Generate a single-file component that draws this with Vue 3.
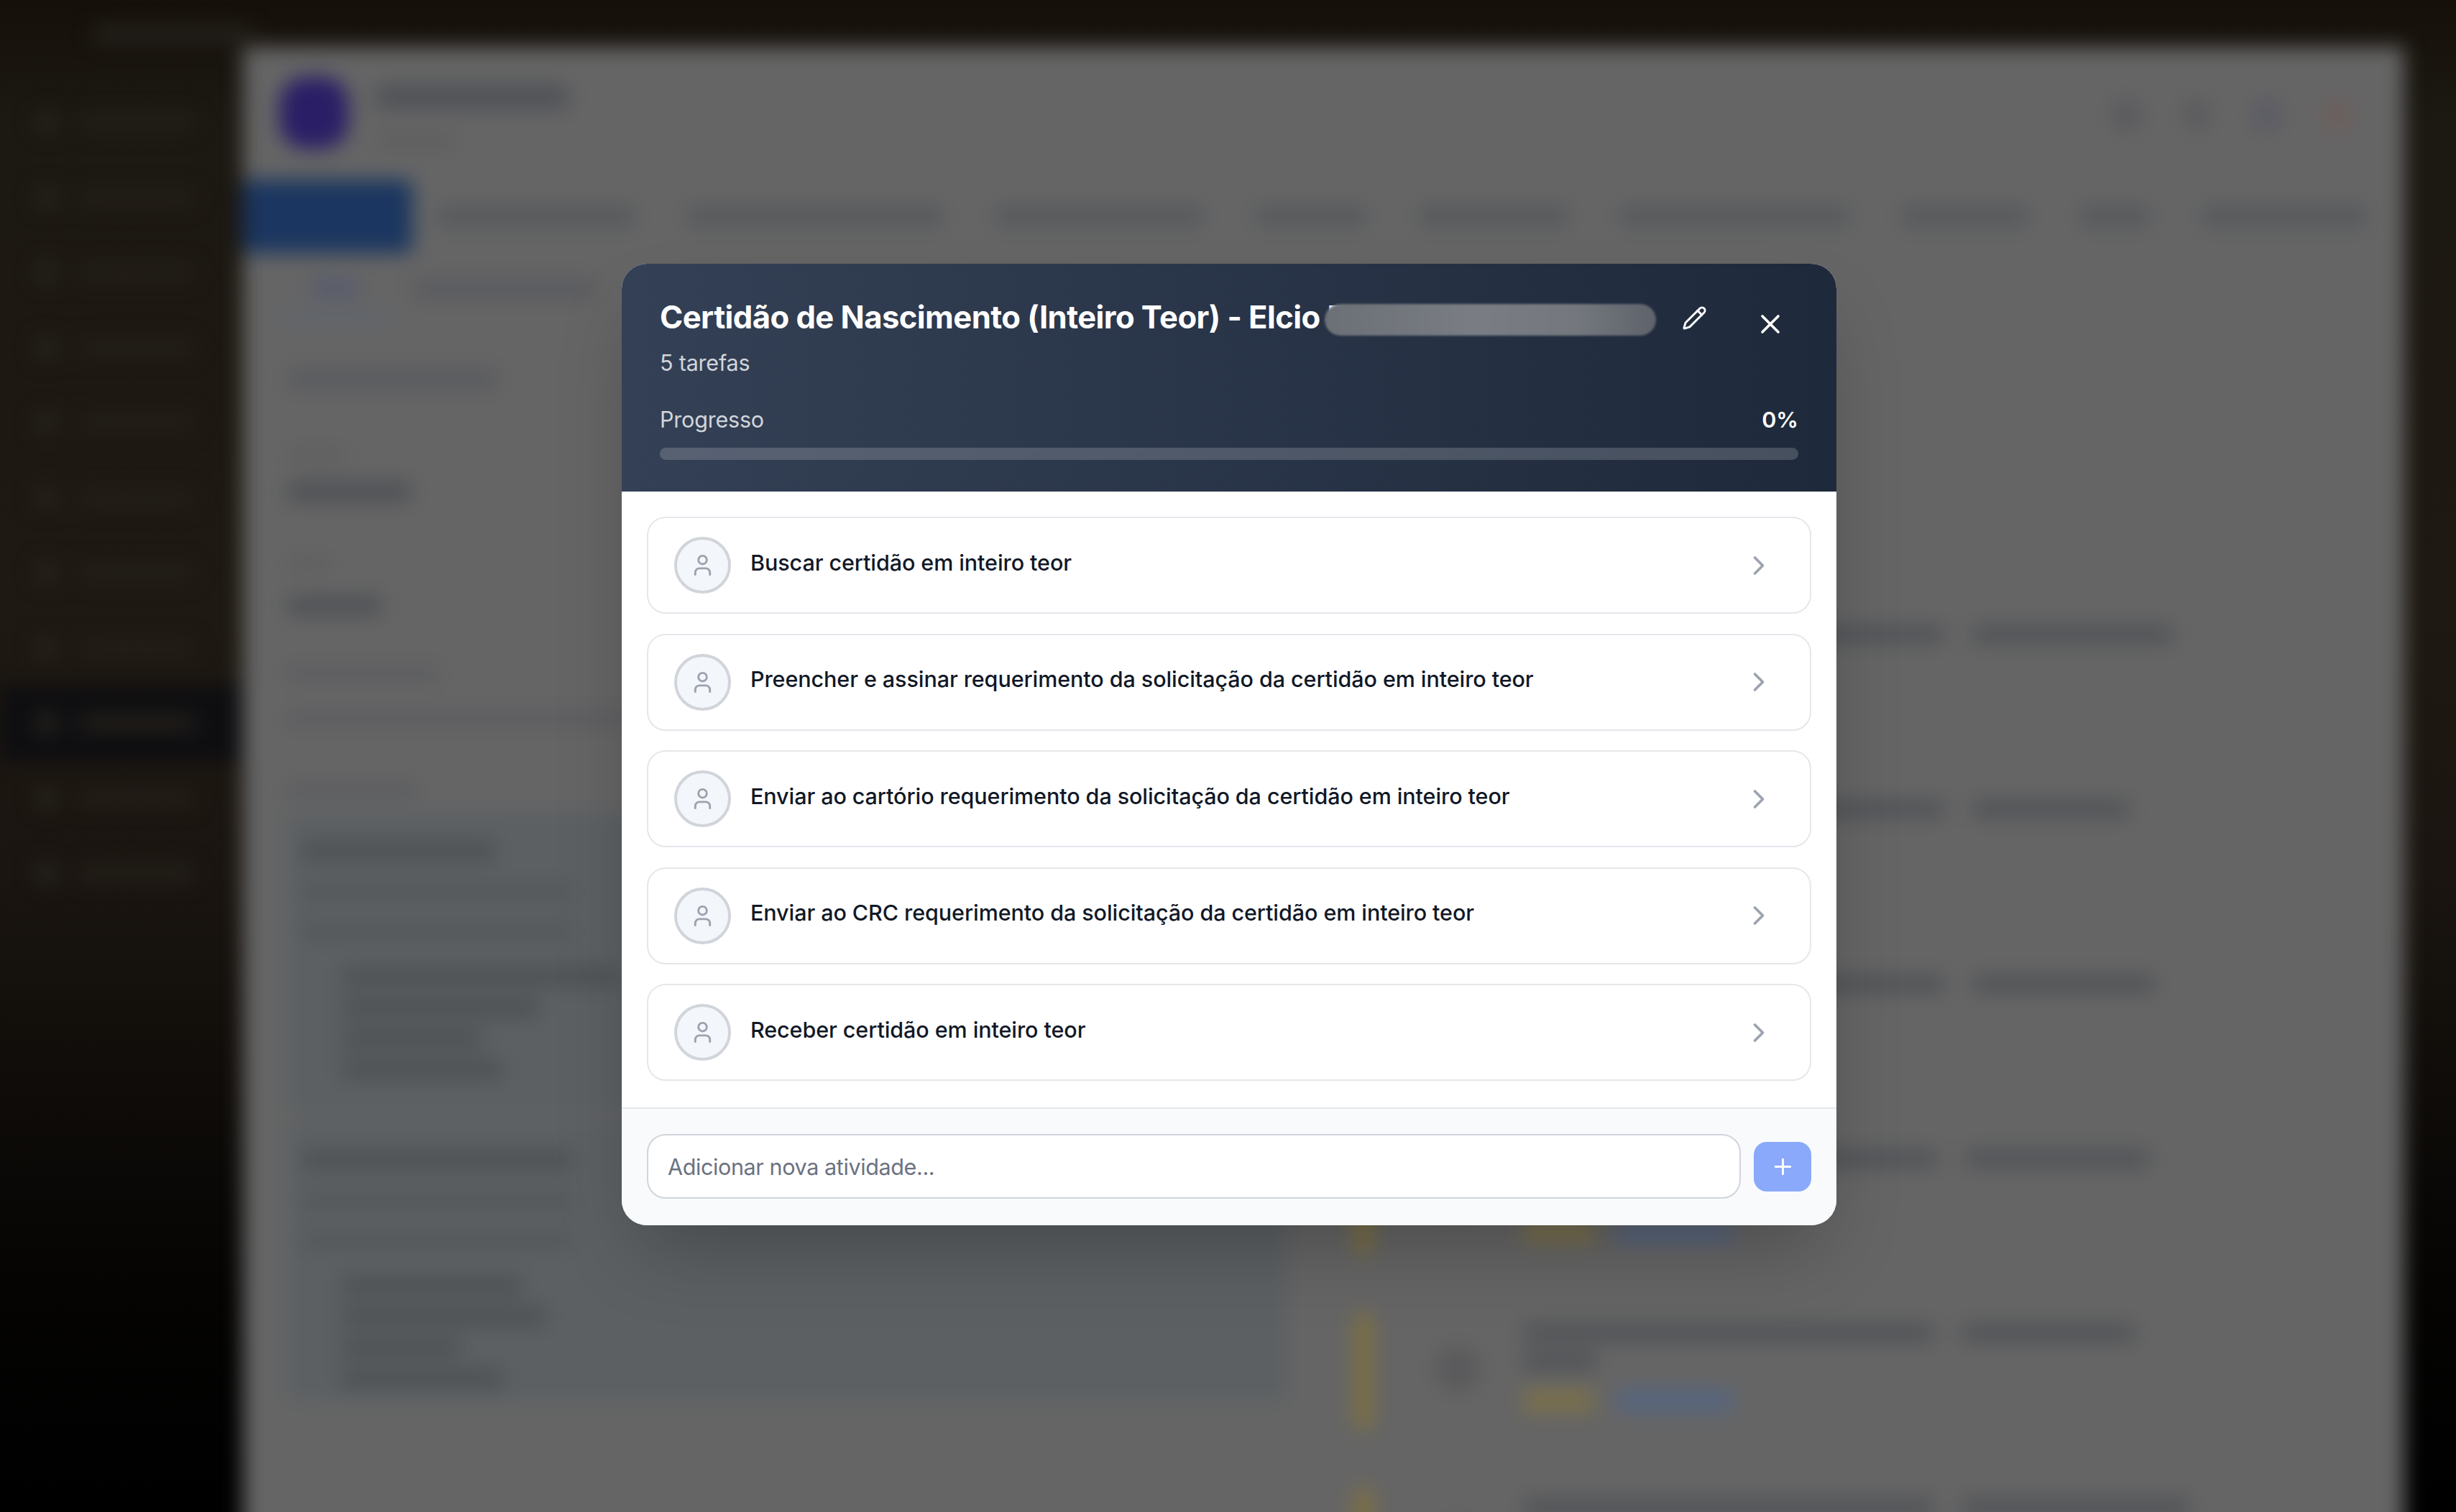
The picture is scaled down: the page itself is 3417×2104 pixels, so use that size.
<script setup>
const sideItems = [0, 1, 2, 3, 4, 5, 6, 7, 8, 9, 10]
const topTabs = [272, 355, 288, 153, 207, 317, 174, 96, 228]
const headIcons = ['#5a5a5f', '#5c5c5f', '#5b5b65', '#6c5f5c']
const fieldRows = [
  { w: 293, cls: 'bar-mid', mt: 63, h: 32 },
  { w: 80, cls: 'bar-faint', mt: 81, h: 20 },
  { w: 171, cls: 'bar-dark', mt: 25, h: 30 },
  { w: 60, cls: 'bar-faint', mt: 75, h: 20 },
  { w: 131, cls: 'bar-dark', mt: 35, h: 28 },
  { w: 210, cls: 'bar-soft', mt: 69, h: 22 },
  { w: 1000, cls: 'bar-soft', mt: 41, h: 22 },
  { w: 178, cls: 'bar-soft', mt: 76, h: 22 }
]
const sections = [
  { head: 270, lines: [375, 375], list: [385, 275, 195, 225] },
  { head: 375, lines: [375, 375], list: [250, 285, 165, 225] }
]
const rightRows = [
  { a: 585, b: 278, wrap: false, tags: false },
  { a: 585, b: 216, wrap: false, tags: false },
  { a: 585, b: 252, wrap: false, tags: false },
  { a: 575, b: 255, wrap: false, tags: true },
  { a: 570, b: 240, wrap: true, tags: true },
  { a: 570, b: 316, wrap: false, tags: false }
]
const tasks = [
  'Buscar certidão em inteiro teor',
  'Preencher e assinar requerimento da solicitação da certidão em inteiro teor',
  'Enviar ao cartório requerimento da solicitação da certidão em inteiro teor',
  'Enviar ao CRC requerimento da solicitação da certidão em inteiro teor',
  'Receber certidão em inteiro teor'
]
</script>

<template>
  <div class="screen">
    <div class="app" aria-hidden="true">
      <aside class="sidebar">
        <div class="brand-bar"></div>
        <div v-for="i in sideItems" :key="i" class="side-item" :class="{ 'side-active': i === 8 }">
          <span class="side-dot"></span>
          <span class="side-bar"></span>
        </div>
      </aside>

      <main class="panel">
        <header class="page-head">
          <div class="page-avatar"></div>
          <div class="page-titles">
            <span class="page-title"></span>
            <span class="page-sub"></span>
          </div>
          <div class="page-icons">
            <span v-for="c in headIcons" :key="c" class="page-icon" :style="{ background: c }"></span>
          </div>
        </header>

        <nav class="tabs">
          <span class="tab-active"></span>
          <span v-for="w in topTabs" :key="w" class="tab-bar" :style="{ width: w + 'px' }"></span>
        </nav>

        <div class="subtabs">
          <div class="subtab-one">
            <span class="subtab-text"></span>
            <span class="subtab-line"></span>
          </div>
          <span class="subtab-two"></span>
        </div>

        <div class="columns">
          <div class="col-left">
            <div
              v-for="(f, i) in fieldRows"
              :key="i"
              class="bar"
              :class="f.cls"
              :style="{ width: f.w + 'px', marginTop: f.mt + 'px', height: f.h + 'px' }"
            ></div>
            <section v-for="(s, i) in sections" :key="i" class="info-card">
              <div class="bar bar-head" :style="{ width: s.head + 'px' }"></div>
              <div v-for="(w, j) in s.lines" :key="j" class="bar bar-soft2" :style="{ width: w + 'px' }"></div>
              <div class="info-list">
                <div v-for="(w, j) in s.list" :key="j" class="bar bar-head" :style="{ width: w + 'px' }"></div>
              </div>
            </section>
          </div>

          <div class="col-right">
            <div v-for="(r, i) in rightRows" :key="i" class="doc-row">
              <span class="doc-stripe"></span>
              <span class="doc-circle"></span>
              <div class="doc-body">
                <div class="doc-line">
                  <span class="bar bar-dark" :style="{ width: r.a + 'px' }"></span>
                  <span class="bar bar-dark" :style="{ width: r.b + 'px' }"></span>
                </div>
                <div v-if="r.wrap" class="bar bar-dark doc-wrap"></div>
                <div v-if="r.tags" class="doc-tags">
                  <span class="tag-yellow"></span>
                  <span class="tag-blue"></span>
                </div>
              </div>
            </div>
          </div>
        </div>
      </main>
    </div>

    <div class="overlay">
      <div class="modal">
        <button class="close" type="button" aria-label="Fechar">
          <svg viewBox="0 0 24 24" class="ico-close"><path d="M18 6 6 18" /><path d="m6 6 12 12" /></svg>
        </button>

        <header class="modal-head">
          <div class="title-row">
            <div class="title-wrap">
              <h2 class="title">Certidão de Nascimento (Inteiro Teor) - Elcio F</h2>
              <span class="smear"></span>
            </div>
            <svg viewBox="0 0 24 24" class="ico-pencil">
              <path d="M21.174 6.812a1 1 0 0 0-3.986-3.987L3.842 16.174a2 2 0 0 0-.5.83l-1.321 4.352a.5.5 0 0 0 .623.622l4.353-1.32a2 2 0 0 0 .83-.497z" />
              <path d="m15 5 4 4" />
            </svg>
          </div>
          <p class="count">5 tarefas</p>
          <div class="progress-row">
            <span>Progresso</span>
            <span class="percent">0%</span>
          </div>
          <div class="track"></div>
        </header>

        <div class="list">
          <div v-for="t in tasks" :key="t" class="task">
            <span class="avatar">
              <svg viewBox="0 0 24 24" class="ico-user">
                <path d="M19 21v-2a4 4 0 0 0-4-4H9a4 4 0 0 0-4 4v2" />
                <circle cx="12" cy="7" r="4" />
              </svg>
            </span>
            <span class="task-label">{{ t }}</span>
            <svg viewBox="0 0 24 24" class="ico-chevron"><path d="m9 18 6-6-6-6" /></svg>
          </div>
        </div>

        <footer class="foot">
          <input class="new-task" type="text" placeholder="Adicionar nova atividade..." />
          <button class="add" type="button" aria-label="Adicionar">
            <svg viewBox="0 0 24 24" class="ico-plus"><path d="M5 12h14" /><path d="M12 5v14" /></svg>
          </button>
        </footer>
      </div>
    </div>
  </div>
</template>

<style>
html,
body {
  margin: 0;
  background: #000;
}
</style>

<style scoped>
.screen {
  position: relative;
  width: 3417px;
  height: 2104px;
  overflow: hidden;
  background: linear-gradient(
    to bottom,
    #15100a 0%,
    #1c1812 8%,
    #1e1912 40%,
    #1a1510 58%,
    #0f0c09 72%,
    #050403 85%,
    #000 100%
  );
  font-family: Inter, 'Noto Sans', sans-serif;
}

/* Blurred page behind the dialog */
.app {
  display: grid;
  grid-template-columns: 338px 3007px;
  height: 2160px;
  filter: blur(14px);
}
.sidebar {
  position: relative;
  padding-top: 118px;
}
.brand-bar {
  position: absolute;
  left: 130px;
  top: 36px;
  width: 220px;
  height: 22px;
  background: #25221d;
}
.side-item {
  display: flex;
  align-items: center;
  gap: 30px;
  height: 104.5px;
  padding-left: 50px;
}
.side-active {
  background: #0e0e11;
}
.side-dot {
  width: 30px;
  height: 30px;
  border-radius: 8px;
  background: #26231d;
}
.side-bar {
  width: 160px;
  height: 24px;
  background: #231f19;
}
.panel {
  margin-top: 65px;
  background: #656565;
  display: flex;
  flex-direction: column;
}
.page-head {
  display: flex;
  align-items: flex-start;
  padding: 42px 72px 0 51px;
  height: 143px;
  box-sizing: border-box;
}
.page-avatar {
  width: 96px;
  height: 100px;
  border-radius: 36px;
  background: #2a1e66;
}
.page-titles {
  display: flex;
  flex-direction: column;
  margin-left: 38px;
  padding-top: 11px;
}
.page-title {
  width: 267px;
  height: 34px;
  background: #505257;
}
.page-sub {
  width: 109px;
  height: 18px;
  margin-top: 35px;
  background: #5d5d5d;
}
.page-icons {
  display: flex;
  gap: 56px;
  margin-left: auto;
  padding-top: 30px;
}
.page-icon {
  width: 42px;
  height: 46px;
  border-radius: 50%;
}
.tabs {
  display: flex;
  align-items: center;
  gap: 74px;
  height: 102px;
  margin-top: 42px;
  border-bottom: 2px solid #606060;
}
.tab-active {
  width: 236px;
  height: 102px;
  margin-right: -38px;
  border-radius: 12px;
  background: #1b3660;
}
.tab-bar {
  height: 26px;
  background: #55585c;
}
.subtabs {
  display: flex;
  gap: 33px;
  padding: 34px 0 0 54px;
  height: 60px;
}
.subtab-one {
  display: flex;
  flex-direction: column;
  align-items: center;
  width: 148px;
}
.subtab-text {
  width: 66px;
  height: 28px;
  background: #565c6e;
}
.subtab-line {
  width: 148px;
  height: 12px;
  margin-top: 24px;
  background: #5c6472;
}
.subtab-two {
  width: 255px;
  height: 28px;
  background: #5a5b60;
}
.columns {
  display: grid;
  grid-template-columns: 1390px 1440px;
  column-gap: 60px;
  padding-left: 62px;
}
.col-left {
  display: flex;
  flex-direction: column;
}
.bar {
  display: block;
  height: 24px;
  flex: none;
}
.bar-dark {
  background: #505256;
}
.bar-mid {
  background: #5b5c60;
}
.bar-faint {
  background: #5f5f60;
}
.bar-soft {
  background: #5c5d60;
}
.bar-head {
  height: 26px;
  background: #4e5154;
}
.bar-soft2 {
  height: 22px;
  margin-top: 33px;
  background: #54575a;
}
.info-card {
  box-sizing: border-box;
  margin-top: 21px;
  width: 1390px;
  height: 420px;
  padding: 41px 20px 0;
  background: #5c6063;
}
.info-card + .info-card {
  margin-top: 10px;
  height: 390px;
}
.info-list {
  display: flex;
  flex-direction: column;
  gap: 17px;
  margin-top: 39px;
  padding-left: 55px;
}
.col-right {
  display: flex;
  flex-direction: column;
  margin-top: 423px;
}
.doc-row {
  display: flex;
  height: 243px;
  flex: none;
}
.doc-stripe {
  width: 24px;
  height: 164px;
  margin-left: 35px;
  margin-top: -17px;
  border-radius: 12px;
  background: #80703f;
}
.doc-circle {
  width: 64px;
  height: 64px;
  margin: 30px 0 0 87px;
  border-radius: 50%;
  background: #5a5a5c;
}
.doc-body {
  margin-left: 60px;
}
.doc-line {
  display: flex;
  gap: 40px;
}
.doc-wrap {
  width: 100px;
  margin-top: 15px;
}
.doc-tags {
  display: flex;
  gap: 33px;
  margin-top: 75px;
}
.doc-wrap + .doc-tags {
  margin-top: 28px;
}
.tag-yellow {
  width: 97px;
  height: 30px;
  background: #7c7049;
}
.tag-blue {
  width: 160px;
  height: 30px;
  background: #566581;
}

/* Dialog */
.overlay {
  position: absolute;
  inset: 0;
  display: flex;
  justify-content: center;
  align-items: flex-start;
  padding: 367px 0 0 3px;
}
.modal {
  position: relative;
  width: 1690px;
  border-radius: 35px;
  overflow: hidden;
  background: #fff;
  box-shadow: 0 54px 109px -26px rgba(0, 0, 0, 0.25);
}
.close {
  position: absolute;
  top: 62px;
  right: 70px;
  width: 44px;
  height: 44px;
  padding: 0;
  border: 0;
  background: none;
  display: flex;
}
.ico-close {
  width: 44px;
  height: 44px;
  fill: none;
  stroke: #fff;
  stroke-width: 2;
  stroke-linecap: round;
  stroke-linejoin: round;
}
.modal-head {
  box-sizing: border-box;
  height: 317px;
  padding: 45px 53px 0 53px;
  background: linear-gradient(to right, #344055, #1e293b);
  color: #fff;
}
.title-row {
  display: flex;
  align-items: center;
  height: 60px;
}
.title-wrap {
  position: relative;
  flex: 0 0 1422px;
}
.title {
  margin: 0;
  font-size: 43.6px;
  line-height: 60px;
  font-weight: 700;
  letter-spacing: -0.56px;
  white-space: nowrap;
}
.smear {
  position: absolute;
  left: 925px;
  top: 11px;
  width: 461px;
  height: 44px;
  border-radius: 22px;
  background: linear-gradient(to right, #6b7076, #797d83 45%, #74787e 75%, #5e636b);
  filter: blur(1.5px);
}
.ico-pencil {
  width: 35px;
  height: 35px;
  flex: none;
  fill: none;
  stroke: #fff;
  stroke-width: 2;
  stroke-linecap: round;
  stroke-linejoin: round;
}
.count {
  margin: 11px 0 0;
  font-size: 30.5px;
  line-height: 44px;
  letter-spacing: -0.2px;
  color: #d1d5db;
}
.progress-row {
  display: flex;
  justify-content: space-between;
  margin-top: 35px;
  font-size: 30.5px;
  line-height: 44px;
  letter-spacing: -0.2px;
  color: #d1d5db;
}
.percent {
  color: #fff;
  font-weight: 600;
  letter-spacing: 0;
}
.track {
  height: 17px;
  margin-top: 17px;
  border-radius: 9px;
  background: rgba(255, 255, 255, 0.18);
}
.list {
  display: flex;
  flex-direction: column;
  gap: 27.5px;
  padding: 35px 35px 37px;
}
.task {
  box-sizing: border-box;
  display: flex;
  align-items: center;
  height: 135px;
  padding: 0 49px 0 36px;
  border: 2px solid #e5e7eb;
  border-radius: 26px;
  background: #fff;
}
.avatar {
  box-sizing: border-box;
  display: flex;
  align-items: center;
  justify-content: center;
  width: 79px;
  height: 79px;
  flex: none;
  border: 4px solid #d1d5db;
  border-radius: 50%;
  background: #f3f6fa;
}
.ico-user {
  width: 35px;
  height: 35px;
  fill: none;
  stroke: #9ca3af;
  stroke-width: 2;
  stroke-linecap: round;
  stroke-linejoin: round;
}
.task-label {
  flex: 1;
  margin: 0 0 8px 27px;
  font-size: 30.5px;
  line-height: 44px;
  font-weight: 500;
  letter-spacing: -0.08px;
  color: #111827;
}
.ico-chevron {
  width: 44px;
  height: 44px;
  flex: none;
  fill: none;
  stroke: #9ca3af;
  stroke-width: 2;
  stroke-linecap: round;
  stroke-linejoin: round;
}
.foot {
  display: flex;
  align-items: center;
  gap: 18px;
  padding: 35px 35px 37px;
  border-top: 2px solid #e5e7eb;
  background: #f8fafc;
}
.new-task {
  box-sizing: border-box;
  flex: 1;
  min-width: 0;
  height: 90px;
  padding: 0 27px;
  border: 2px solid #d1d5db;
  border-radius: 26px;
  background: #fff;
  font-family: Inter, 'Noto Sans', sans-serif;
  font-size: 30.5px;
  letter-spacing: -0.38px;
  color: #111827;
  outline: none;
}
.new-task::placeholder {
  color: #6b7280;
  opacity: 1;
}
.add {
  display: flex;
  align-items: center;
  justify-content: center;
  width: 80px;
  height: 69px;
  flex: none;
  padding: 0;
  border: 0;
  border-radius: 18px;
  background: #8aa9fb;
}
.ico-plus {
  width: 35px;
  height: 35px;
  fill: none;
  stroke: #fff;
  stroke-width: 2;
  stroke-linecap: round;
  stroke-linejoin: round;
}
</style>
